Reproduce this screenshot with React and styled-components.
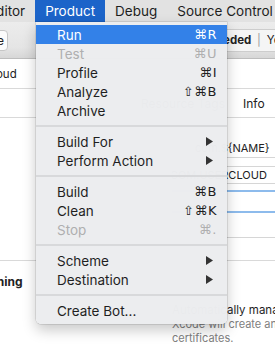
import React from "react";
import styled, { createGlobalStyle } from "styled-components";

const GlobalStyle = createGlobalStyle`
  html, body {
    margin: 0;
    padding: 0;
    background: #ffffff;
  }
  body {
    font-family: Inter, "Liberation Sans", "DejaVu Sans", sans-serif;
    -webkit-font-smoothing: antialiased;
  }
`;

const Window = styled.div`
  position: relative;
  width: 275px;
  height: 349px;
  overflow: hidden;
  background: #ffffff;
`;

const MenuBar = styled.div`
  display: flex;
  height: 22px;
  background: #e2e2e2;
  font-size: 13.5px;
  color: #1e1e1e;
  white-space: nowrap;
`;

const BarItem = styled.div`
  flex-shrink: 0;
  padding: 0 10px;
  line-height: 22px;
  margin-left: ${({ offset }) => offset || 0}px;
  background: ${({ active }) => (active ? "#1c64c9" : "transparent")};
  color: ${({ active }) => (active ? "#ffffff" : "inherit")};
`;

const Toolbar = styled.div`
  display: flex;
  align-items: center;
  height: 36px;
  background: linear-gradient(#ececec 0%, #e5e5e5 70%, #d7d7d7 100%);
  border-bottom: 1px solid #bdbdbd;
`;

const ToolButton = styled.div`
  flex-shrink: 0;
  display: flex;
  justify-content: flex-end;
  align-items: center;
  width: 44px;
  height: 21px;
  margin-left: -36px;
  padding-right: 3px;
  box-sizing: border-box;
  background: #fbfbfb;
  border: 1px solid #c6c6c6;
  border-radius: 4px;
  font-size: 12px;
  color: #222;
`;

const ActivityBox = styled.div`
  flex-shrink: 0;
  display: flex;
  align-items: center;
  height: 23px;
  width: 200px;
  margin-left: 140px;
  padding-left: 8px;
  box-sizing: border-box;
  background: #f5f5f5;
  border: 1px solid #cdcdcd;
  border-radius: 4px;
  font-size: 11.5px;
  color: #222;
  white-space: nowrap;
`;

const Status = styled.span`
  width: 93px;
  text-align: right;
  font-weight: 700;
`;

const Pipe = styled.span`
  margin: 0 6px 0 7px;
  color: #9a9a9a;
`;

const Content = styled.div`
  margin-left: -40px;
  width: 315px;
  font-size: 11.5px;
  color: #222;
`;

const Row = styled.div`
  display: grid;
  grid-template-columns: 212px 1fr;
  height: ${({ h }) => h}px;
  border-bottom: ${({ line }) => (line ? "1px solid #d9d9d9" : "none")};
  align-items: ${({ align }) => align || "center"};
  white-space: nowrap;
`;

const Label = styled.div`
  padding-left: ${({ indent }) => indent || 0}px;
  font-weight: ${({ bold }) => (bold ? 700 : 400)};
`;

const Tabs = styled.div`
  display: flex;
  gap: 18px;
  margin-left: -31px;
  font-size: 12px;
`;

const FieldStack = styled.div`
  display: flex;
  flex-direction: column;
  padding-top: ${({ top }) => top}px;
`;

const Field = styled.div`
  height: ${({ h }) => h}px;
  line-height: ${({ h }) => h - 2}px;
  margin-bottom: ${({ gap }) => gap || 0}px;
  text-indent: ${({ shift }) => shift || 0}px;
  box-sizing: border-box;
  border-top: ${({ top }) => top || "none"};
  border-bottom: ${({ bottom }) => bottom || "none"};
  font-size: 11px;
  white-space: nowrap;
  overflow: hidden;
`;

const Section = styled.div`
  display: grid;
  grid-template-columns: 212px 1fr;
  border-top: 1px solid #d9d9d9;
  white-space: nowrap;
`;

const SectionTitle = styled.div`
  padding: 13px 0 0 18px;
  font-weight: 700;
  font-size: 12px;
`;

const SigningBox = styled.div`
  padding-top: 42px;
  line-height: 14px;
`;

const CheckLabel = styled.div`
  font-size: 11.5px;
  color: #1e1e1e;
`;

const Hint = styled.div`
  font-size: 11px;
  color: #808080;
`;

const Menu = styled.div`
  position: absolute;
  top: 22px;
  left: 36px;
  width: 191px;
  padding: 3px 0 4px;
  background: rgba(236, 237, 239, 0.99);
  border-radius: 0 0 5px 5px;
  box-shadow: 0 0 0 0.5px rgba(0, 0, 0, 0.18), 0 6px 14px rgba(0, 0, 0, 0.22);
  font-size: 13.5px;
`;

const Item = styled.div`
  display: flex;
  align-items: center;
  justify-content: space-between;
  height: 19px;
  padding: 0 10px 0 21px;
  white-space: nowrap;
  background: ${({ active }) => (active ? "#3381e8" : "transparent")};
  color: ${({ active, disabled }) =>
    active ? "#ffffff" : disabled ? "#afafaf" : "#1f1f1f"};
`;

const Shortcut = styled.span`
  font-family: "DejaVu Sans", Inter, sans-serif;
  font-size: 13px;
  letter-spacing: 0.5px;
`;

const Separator = styled.div`
  height: 2px;
  margin: 5px 0;
  background: #d8d9db;
`;

const Arrow = () => (
  <svg width="7" height="9" viewBox="0 0 7 9" style={{ marginRight: 4 }}>
    <path d="M0 0 L7 4.5 L0 9 Z" fill="#333" />
  </svg>
);

const menu = [
  [
    { label: "Run", key: "⌘R", active: true },
    { label: "Test", key: "⌘U", disabled: true },
    { label: "Profile", key: "⌘I" },
    { label: "Analyze", key: "⇧⌘B" },
    { label: "Archive" },
  ],
  [
    { label: "Build For", sub: true },
    { label: "Perform Action", sub: true },
  ],
  [
    { label: "Build", key: "⌘B" },
    { label: "Clean", key: "⇧⌘K" },
    { label: "Stop", key: "⌘.", disabled: true },
  ],
  [
    { label: "Scheme", sub: true },
    { label: "Destination", sub: true },
  ],
  [{ label: "Create Bot..." }],
];

const blueLine = "2px solid #8dbbec";
const grayLine = "1px solid #d6d6d6";

export default function App() {
  return (
    <Window>
      <GlobalStyle />
      <MenuBar>
        <BarItem offset={-22}>Editor</BarItem>
        <BarItem active>Product</BarItem>
        <BarItem>Debug</BarItem>
        <BarItem>Source Control</BarItem>
      </MenuBar>

      <Toolbar>
        <ToolButton>Hide</ToolButton>
        <ActivityBox>
          <Status>Build Succeeded</Status>
          <Pipe>|</Pipe>
          <span>Yesterday at 9:41 AM</span>
        </ActivityBox>
      </Toolbar>

      <Content>
        <Row h={29} line>
          <Label indent={22}>iCloud</Label>
          <div />
        </Row>
        <Row h={28} line>
          <div />
          <Tabs>
            <span>Resource Tags</span>
            <span>Info</span>
            <span>Build Settings</span>
          </Tabs>
        </Row>
        <Row h={142} align="start">
          <div />
          <FieldStack top={22}>
            <Field h={18} bottom={grayLine} gap={8} shift={23}>
              com.${"{NAME}"}
            </Field>
            <Field h={18} top={grayLine} bottom={grayLine} gap={6} shift={-38}>
              iCloud.COM.USERCLOUD
            </Field>
            <Field h={23} top={blueLine} bottom={blueLine} gap={24} />
            <Field h={1} bottom={grayLine} />
          </FieldStack>
        </Row>
        <Section>
          <SectionTitle>Signing</SectionTitle>
          <SigningBox>
            <CheckLabel>Automatically manage signing</CheckLabel>
            <Hint>Xcode will create and update profiles, app IDs, and</Hint>
            <Hint>certificates.</Hint>
          </SigningBox>
        </Section>
      </Content>

      <Menu>
        {menu.map((group, gi) => (
          <React.Fragment key={gi}>
            {gi > 0 && <Separator />}
            {group.map((it) => (
              <Item key={it.label} active={it.active} disabled={it.disabled}>
                <span>{it.label}</span>
                {it.key && <Shortcut>{it.key}</Shortcut>}
                {it.sub && <Arrow />}
              </Item>
            ))}
          </React.Fragment>
        ))}
      </Menu>
    </Window>
  );
}
